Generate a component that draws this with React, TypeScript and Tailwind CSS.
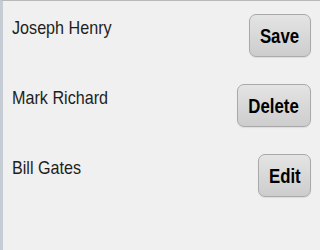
const rows = [
  { name: 'Joseph Henry', action: 'Save', w: 'w-[62px]' },
  { name: 'Mark Richard', action: 'Delete', w: 'w-[74px]' },
  { name: 'Bill Gates', action: 'Edit', w: 'w-[53px]' },
]

export default function App() {
  return (
    <div className="w-[320px] h-[250px] bg-[#f0f0f0] border-t border-[#b8b8b8] border-l-[3px] border-l-[#c5ccd4] overflow-hidden font-['Liberation_Sans',Arial,sans-serif]">
      <div className="pt-[13px] pl-[9px] pr-[9px] flex flex-col gap-[27px]">
        {rows.map(r => (
          <div key={r.name} className="flex items-start justify-between">
            <span className="mt-[3px] text-[19px] leading-[22px] text-[#1e1e1e] scale-x-[0.85] origin-left whitespace-nowrap">
              {r.name}
            </span>
            <button
              className={`${r.w} h-[43px] rounded-[7px] border border-[#a9a9a9] bg-gradient-to-b from-[#e4e4e4] to-[#cdcdcd] shadow-[0_1px_1px_rgba(0,0,0,0.08)] flex items-center justify-center`}
            >
              <span className="text-[21px] leading-none font-bold text-black scale-x-[0.8] whitespace-nowrap">
                {r.action}
              </span>
            </button>
          </div>
        ))}
      </div>
    </div>
  )
}
